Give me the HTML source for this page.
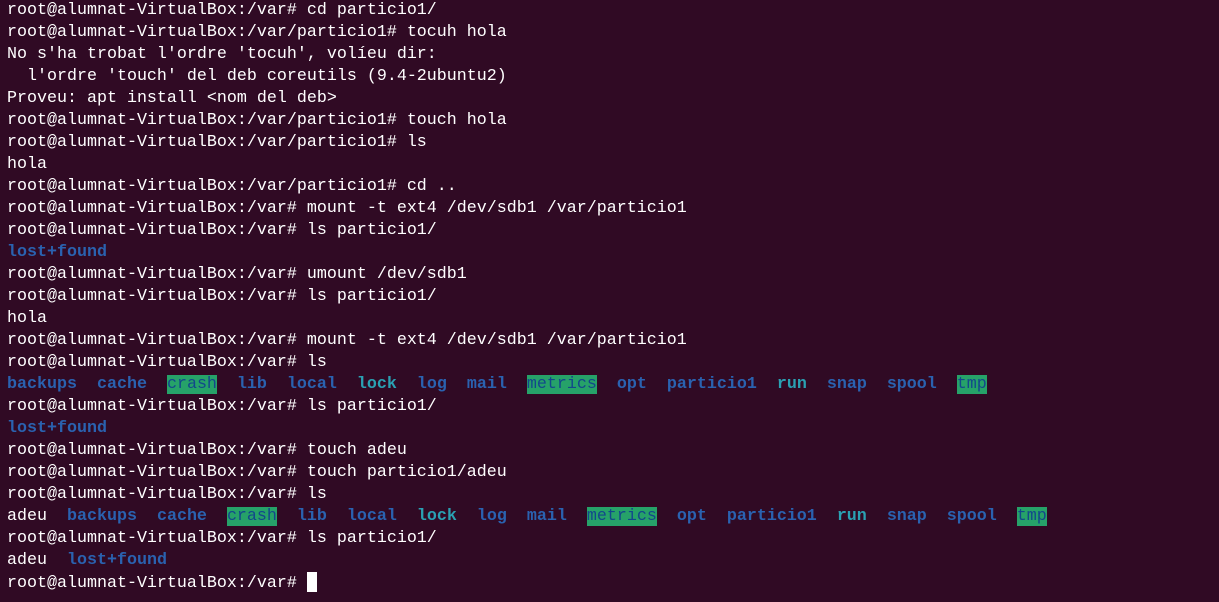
<!DOCTYPE html>
<html><head><style>
body{margin:0;background:#300a24;width:1219px;height:602px;overflow:hidden}
pre{margin:0;position:absolute;left:7px;top:0px;font-family:"Liberation Mono",monospace;font-size:16.67px;line-height:22px;color:#ffffff;letter-spacing:0}
.b{color:#2a62b0;font-weight:bold}
.c{color:#2aa1b3;font-weight:bold}
.g{background:#26a269;color:#12488b}
.cur{background:#fff;display:inline-block;width:10px;height:20px;vertical-align:-5px}
</style></head><body><pre>root@alumnat-VirtualBox:/var# cd particio1/
root@alumnat-VirtualBox:/var/particio1# tocuh hola
No s'ha trobat l'ordre 'tocuh', volíeu dir:
  l'ordre 'touch' del deb coreutils (9.4-2ubuntu2)
Proveu: apt install &lt;nom del deb&gt;
root@alumnat-VirtualBox:/var/particio1# touch hola
root@alumnat-VirtualBox:/var/particio1# ls
hola
root@alumnat-VirtualBox:/var/particio1# cd ..
root@alumnat-VirtualBox:/var# mount -t ext4 /dev/sdb1 /var/particio1
root@alumnat-VirtualBox:/var# ls particio1/
<span class="b">lost+found</span>
root@alumnat-VirtualBox:/var# umount /dev/sdb1
root@alumnat-VirtualBox:/var# ls particio1/
hola
root@alumnat-VirtualBox:/var# mount -t ext4 /dev/sdb1 /var/particio1
root@alumnat-VirtualBox:/var# ls
<span class="b">backups</span>  <span class="b">cache</span>  <span class="g">crash</span>  <span class="b">lib</span>  <span class="b">local</span>  <span class="c">lock</span>  <span class="b">log</span>  <span class="b">mail</span>  <span class="g">metrics</span>  <span class="b">opt</span>  <span class="b">particio1</span>  <span class="c">run</span>  <span class="b">snap</span>  <span class="b">spool</span>  <span class="g">tmp</span>
root@alumnat-VirtualBox:/var# ls particio1/
<span class="b">lost+found</span>
root@alumnat-VirtualBox:/var# touch adeu
root@alumnat-VirtualBox:/var# touch particio1/adeu
root@alumnat-VirtualBox:/var# ls
adeu  <span class="b">backups</span>  <span class="b">cache</span>  <span class="g">crash</span>  <span class="b">lib</span>  <span class="b">local</span>  <span class="c">lock</span>  <span class="b">log</span>  <span class="b">mail</span>  <span class="g">metrics</span>  <span class="b">opt</span>  <span class="b">particio1</span>  <span class="c">run</span>  <span class="b">snap</span>  <span class="b">spool</span>  <span class="g">tmp</span>
root@alumnat-VirtualBox:/var# ls particio1/
adeu  <span class="b">lost+found</span>
root@alumnat-VirtualBox:/var# <span class="cur"></span></pre></body></html>
